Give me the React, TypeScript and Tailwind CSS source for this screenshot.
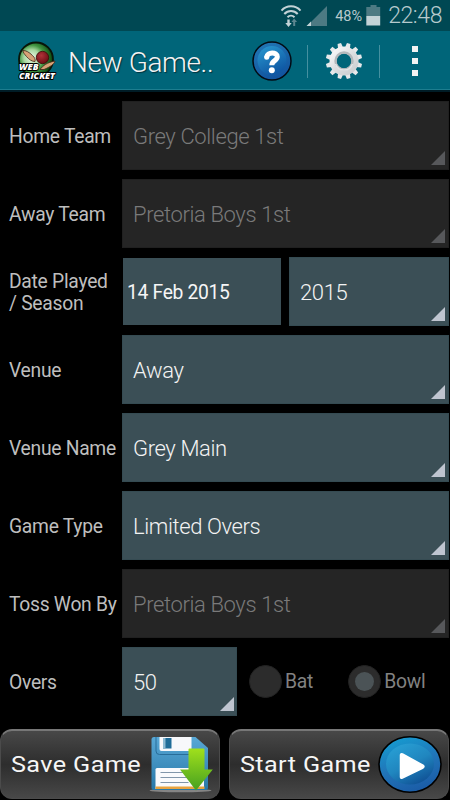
import type { ReactNode } from "react";

function WifiIcon() {
  return (
    <svg width="22" height="24" viewBox="0 0 22 24" fill="none" stroke="#c3d3d7" strokeWidth="2">
      <path d="M1.500 6.600C6.500.900 15.500.900 20.500 6.600" />
      <path d="M4.300 10c3.800-4 9.600-4 13.400 0" />
      <path d="M7.500 13.200c2-2 5-2 7 0" />
      <path d="M7.300 15.500h2.400v3.500h2l-3.200 4-3.200-4h2z" fill="#c3d3d7" stroke="none" />
      <path d="M13.200 22v-4h-1.700l2.600-3.500 3 3.500h-1.900v4z" fill="#5d868f" stroke="none" />
    </svg>
  );
}

function SignalIcon() {
  return (
    <svg width="22" height="22" viewBox="0 0 22 22">
      <path d="M21 1v20H1z" fill="#4d7a83" />
      <path d="M5 16.500V21H0.500z" fill="#c3d3d7" />
    </svg>
  );
}

function BatteryIcon() {
  return (
    <svg width="15" height="21" viewBox="0 0 15 21">
      <path d="M4.500 0h6v2h3.700v9H.3V2h4.200z" fill="#4d7a83" />
      <path d="M.3 11h13.900v9.500H.3z" fill="#c3d3d7" />
    </svg>
  );
}

function Logo() {
  return (
    <svg width="40" height="40" viewBox="0 0 40 40">
      <defs>
        <radialGradient id="field" cx="38%" cy="45%" r="58%">
          <stop offset="0" stopColor="#f0faea" />
          <stop offset=".4" stopColor="#a9d8a2" />
          <stop offset=".65" stopColor="#3f9440" />
          <stop offset="1" stopColor="#0f4f14" />
        </radialGradient>
        <radialGradient id="ball" cx="40%" cy="35%" r="65%">
          <stop offset="0" stopColor="#b03238" />
          <stop offset="1" stopColor="#6d0d14" />
        </radialGradient>
      </defs>
      <circle cx="18" cy="18.500" r="17" fill="url(#field)" stroke="#081509" strokeWidth="1.800" />
      <path d="M5 9.500c3 0 6 1.500 9.500 5 2.500 2.500 3 4 2.500 6-3 0-6-2-8.500-5-2-2.300-3.500-4-3.500-6z" fill="#d7a277" stroke="#402317" strokeWidth=".8" />
      <path d="M22 28.500c3-4 7-7 15-8.500-.5 3-5 6-11 8.500z" fill="#d7a277" stroke="#402317" strokeWidth=".8" />
      <circle cx="24.500" cy="16.500" r="6.200" fill="url(#ball)" stroke="#3c0709" strokeWidth=".8" />
      <g
        className="font-['Open_Sans'] italic font-extrabold"
        fill="#fff"
        stroke="#000"
        strokeWidth="2"
        paintOrder="stroke"
        strokeLinejoin="round"
        fontSize="9.300"
      >
        <text x="1" y="37.500" textLength="36" lengthAdjust="spacingAndGlyphs">CRICKET</text>
        <text x="1" y="29.300" textLength="19.500" lengthAdjust="spacingAndGlyphs">WEB</text>
      </g>
    </svg>
  );
}

function HelpIcon() {
  return (
    <svg width="40" height="40" viewBox="0 0 40 40">
      <defs>
        <linearGradient id="helpBg" x1="0" y1="0" x2=".4" y2="1">
          <stop offset="0" stopColor="#2379b5" />
          <stop offset="1" stopColor="#1255a0" />
        </linearGradient>
        <linearGradient id="helpInner" x1="0" y1="0" x2=".5" y2="1">
          <stop offset="0" stopColor="#2a9ad0" />
          <stop offset="1" stopColor="#0f58a4" />
        </linearGradient>
      </defs>
      <circle cx="20" cy="20" r="19" fill="url(#helpBg)" stroke="#020b14" strokeWidth="1.500" />
      <circle cx="20" cy="19.500" r="14.500" fill="url(#helpInner)" />
      <path d="M14.700 16.200c.3-5.500 10.600-5.600 10.600-.4 0 4-5.500 3.700-5.500 8.400" fill="none" stroke="#fff" strokeWidth="5" strokeLinejoin="round" />
      <circle cx="14.700" cy="16.200" r="2.500" fill="#fff" />
      <circle cx="19.800" cy="29.300" r="3" fill="#fff" />
    </svg>
  );
}

const teeth = [0, 30, 60, 90, 120, 150, 180, 210, 240, 270, 300, 330];

function GearIcon() {
  return (
    <svg width="38" height="38" viewBox="-19 -19 38 38">
      <defs>
        <linearGradient id="steel" gradientUnits="userSpaceOnUse" x1="-14" y1="-14" x2="12" y2="16">
          <stop offset="0" stopColor="#fff" />
          <stop offset=".5" stopColor="#dcdee0" />
          <stop offset="1" stopColor="#c8cbce" />
        </linearGradient>
      </defs>
      {teeth.map((a) => (
        <path key={a} d="M-2.600-13L-1.800-18.200h3.600L2.600-13z" fill="#e6e8ea" transform={`rotate(${a + 15})`} />
      ))}
      <circle r="11" fill="none" stroke="url(#steel)" strokeWidth="7" />
      <circle r="8.500" fill="none" stroke="#b4b8bb" strokeWidth="2.400" />
      <path d="M-8.500 3A9 9 0 0 0 8.500 3" fill="none" stroke="#e3e5e7" strokeWidth="1.600" />
    </svg>
  );
}

function FloppyIcon() {
  return (
    <svg width="64" height="58" viewBox="0 0 64 58">
      <defs>
        <linearGradient id="disk" x1="0" y1="0" x2="0" y2="1">
          <stop offset="0" stopColor="#58a8d6" />
          <stop offset="1" stopColor="#2878a8" />
        </linearGradient>
        <linearGradient id="arrow" x1="0" y1="0" x2="0" y2="1">
          <stop offset="0" stopColor="#a0e01c" />
          <stop offset="1" stopColor="#46a020" />
        </linearGradient>
      </defs>
      <ellipse cx="31.500" cy="54.500" rx="31" ry="1.800" fill="#858585" />
      <path d="M5 1h41.500L59 12v40q0 2-2 2H5q-2.500 0-2.500-2.500v-48Q2.500 1 5 1z" fill="url(#disk)" />
      <path d="M7 1v14q0 3.500 3.500 3.500H40" fill="none" stroke="#286d99" strokeWidth="1" />
      <path d="M10.500 1h32v14h-30q-2 0-2-2z" fill="#f7f8fb" />
      <path d="M14 2h8.500v10.500H14z" fill="#1f6c98" />
      <path d="M14 2h2.500v10.500H14z" fill="#8bb9d2" />
      <path d="M8 32h47v21H6.500V33.500Q6.500 32 8 32z" fill="#f9fafc" />
      <path d="M6.500 50.500h49V53h-49z" fill="#e8a33f" />
      <path d="M11.500 36.500h28M11.500 41.500h28M11.500 46.500h28" stroke="#8196aa" strokeWidth="1.200" />
      <path d="M40.500 12.500h14q1 0 1 1V33.500h8.300L47 54.500 31 33.500h8.500v-20q0-1 1-1z" fill="url(#arrow)" />
    </svg>
  );
}

function PlayIcon() {
  return (
    <svg width="64" height="58" viewBox="0 0 64 58">
      <defs>
        <linearGradient id="playBg" x1=".3" y1="0" x2=".7" y2="1">
          <stop offset="0" stopColor="#169bd0" />
          <stop offset=".5" stopColor="#2174b8" />
          <stop offset="1" stopColor="#1a5aa5" />
        </linearGradient>
        <linearGradient id="playInner" x1=".2" y1="0" x2=".8" y2="1">
          <stop offset="0" stopColor="#28a0d5" />
          <stop offset=".5" stopColor="#2086bf" />
          <stop offset="1" stopColor="#0e4c91" />
        </linearGradient>
      </defs>
      <ellipse cx="32" cy="28.500" rx="31" ry="27.700" fill="url(#playBg)" stroke="#000" strokeWidth="1.600" />
      <ellipse cx="32" cy="28" rx="24" ry="20.500" fill="url(#playInner)" />
      <path d="M22.500 19v22q0 1.800 1.800 1.100L45 32q2-1.500 0-2.800L24.500 18q-2-.8-2 1z" fill="#fff" stroke="#fff" strokeWidth="1.500" strokeLinejoin="round" />
    </svg>
  );
}

function Row({ label, children }: { label: ReactNode; children: ReactNode }) {
  return (
    <div className="flex h-[69px] items-center">
      <span className="w-[122px] shrink-0 whitespace-nowrap pl-[9px] pt-[2px] text-[19.3px] leading-[21.5px] tracking-[-0.28px] text-[#bebebe]">
        {label}
      </span>
      {children}
    </div>
  );
}

function Spinner({ value, disabled = false, width = "w-[326.5px]" }: { value: string; disabled?: boolean; width?: string }) {
  return (
    <button
      disabled={disabled}
      className={`relative flex h-[68.7px] items-center border pt-px pl-[10px] text-left text-[22px] font-light tracking-[-0.38px] ${width} ${
        disabled ? "border-[#202020] bg-[#252525] text-[#7a7a7a]" : "border-[#354b52] bg-[#3b4f56] text-[#f3f3f3]"
      }`}
    >
      {value}
      <svg
        className={`absolute right-[2.5px] bottom-[4px] ${disabled ? "text-[#57585b]" : "text-[#bfc5d0]"}`}
        width="14"
        height="14"
        viewBox="0 0 14 14"
      >
        <path d="M14 0v14H0z" fill="currentColor" />
      </svg>
    </button>
  );
}

function Radio({ label, checked = false }: { label: string; checked?: boolean }) {
  return (
    <label className="flex items-center gap-[3px] text-[19.3px] text-[#828282]">
      <span className="grid h-[33px] w-[33px] place-items-center rounded-full border border-[#232323] bg-[#2c2c2c]">
        {checked && <span className="h-[19px] w-[19px] rounded-full bg-[#4b5356]" />}
      </span>
      <span className="pt-px tracking-[-0.2px]">{label}</span>
    </label>
  );
}

function ActionButton({ label, icon }: { label: string; icon: ReactNode }) {
  return (
    <button className="flex h-[70px] w-[220px] items-center justify-between rounded-[12px] border border-t-2 border-[#4b4b4b] border-t-[#777] bg-linear-to-b from-[#484848] via-[#2d2d2d] via-50% to-[#484848] pl-[10px] text-[22.5px] text-[#f6f6f6]">
      <span className="w-[118px] origin-left scale-x-[1.12] text-left tracking-[0.35px] whitespace-nowrap">{label}</span>
      {icon}
    </button>
  );
}

export default function App() {
  return (
    <div className="flex h-[800px] w-[450px] flex-col overflow-hidden bg-black font-[Roboto,sans-serif]">
      <div className="flex h-[31px] shrink-0 items-center justify-end bg-[#004853] pr-[8px] text-[#b7cacd]">
        <WifiIcon />
        <span className="ml-[4px]">
          <SignalIcon />
        </span>
        <span className="ml-[7px] pt-[3px] text-[14.5px]">48%</span>
        <span className="ml-[4px]">
          <BatteryIcon />
        </span>
        <span className="ml-[7px] pt-[2px] text-[23px] font-light tracking-[-0.4px]">22:48</span>
      </div>

      <header className="flex h-[59px] shrink-0 items-center border-b border-[#1d7d8f] bg-[#006579] pt-[2px] shadow-[0_2px_0_#001c26]">
        <span className="ml-[18px]">
          <Logo />
        </span>
        <h1 className="ml-[10px] w-[184px] pt-[3px] text-[28px] font-light tracking-[-0.4px] text-[#f3f3f3] [text-shadow:1px_1px_1px_#00333f]">
          New Game..
        </h1>
        <HelpIcon />
        <span className="ml-[15px] h-[33px] w-px bg-[#4590a0]" />
        <span className="ml-[17px]">
          <GearIcon />
        </span>
        <span className="ml-[16px] h-[33px] w-px bg-[#4590a0]" />
        <span className="ml-[32px] flex flex-col gap-[6px]">
          <i className="h-[6px] w-[6px] bg-[#f3f3f3]" />
          <i className="h-[6px] w-[6px] bg-[#f3f3f3]" />
          <i className="h-[6px] w-[6px] bg-[#f3f3f3]" />
        </span>
      </header>

      <main className="flex flex-col gap-[9px] pt-[11px]">
        <Row label="Home Team">
          <Spinner value="Grey College 1st" disabled />
        </Row>
        <Row label="Away Team">
          <Spinner value="Pretoria Boys 1st" disabled />
        </Row>
        <Row
          label={
            <>
              Date Played
              <br />/ Season
            </>
          }
        >
          <button className="ml-px flex h-[67px] w-[158px] items-center bg-[#3b4f56] pt-[3px] pl-[4px] text-[19.3px] tracking-[-0.32px] text-[#f6f6f6]">
            14 Feb 2015
          </button>
          <span className="ml-[8px]">
            <Spinner value="2015" width="w-[159.5px]" />
          </span>
        </Row>
        <Row label="Venue">
          <Spinner value="Away" />
        </Row>
        <Row label="Venue Name">
          <Spinner value="Grey Main" />
        </Row>
        <Row label="Game Type">
          <Spinner value="Limited Overs" />
        </Row>
        <Row label="Toss Won By">
          <Spinner value="Pretoria Boys 1st" disabled />
        </Row>
        <Row label="Overs">
          <Spinner value="50" width="w-[115px]" />
          <div className="ml-[12px] flex gap-[35px]">
            <Radio label="Bat" />
            <Radio label="Bowl" checked />
          </div>
        </Row>
      </main>

      <footer className="mt-auto flex justify-between pr-px pb-px">
        <ActionButton label="Save Game" icon={<span className="mr-[6px]"><FloppyIcon /></span>} />
        <ActionButton label="Start Game" icon={<span className="mr-[6px]"><PlayIcon /></span>} />
      </footer>
    </div>
  );
}
